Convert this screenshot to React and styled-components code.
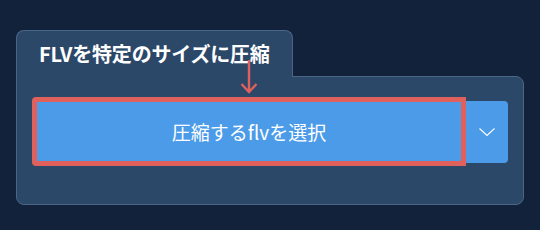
import React from 'react';
import styled, { createGlobalStyle } from 'styled-components';

const GlobalStyle = createGlobalStyle`
  html, body {
    margin: 0;
    padding: 0;
    background: #12223a;
  }
  body {
    font-family: "Noto Sans CJK JP", "Noto Sans", sans-serif;
  }
`;

const Page = styled.div`
  width: 540px;
  height: 230px;
  padding: 30px 0 0 16px;
  box-sizing: border-box;
  position: relative;
`;

const Tab = styled.div`
  position: relative;
  z-index: 1;
  display: flex;
  align-items: center;
  box-sizing: border-box;
  width: 277px;
  height: 47px;
  margin-bottom: -1px;
  padding: 0 0 2px 22px;
  background: #2c4869;
  border: 1px solid #4a6586;
  border-bottom: none;
  border-radius: 8px 8px 0 0;
  color: #ffffff;
  font-size: 20px;
  font-weight: 700;
  letter-spacing: -0.2px;
`;

const Panel = styled.div`
  box-sizing: border-box;
  width: 508px;
  height: 129px;
  padding: 20px 15px;
  background: #2c4869;
  border: 1px solid #4a6586;
  border-radius: 0 8px 8px 8px;
`;

const ButtonGroup = styled.div`
  display: flex;
  align-items: center;
`;

const MainButton = styled.button`
  box-sizing: border-box;
  width: 434px;
  height: 69px;
  padding: 0 0 1px;
  background: #4c9be8;
  border: 5px solid #e0605c;
  border-radius: 4px 0 0 4px;
  color: #ffffff;
  font-family: inherit;
  font-size: 19px;
  cursor: pointer;
`;

const DropButton = styled.button`
  display: flex;
  align-items: center;
  justify-content: center;
  box-sizing: border-box;
  width: 42px;
  height: 62px;
  padding: 0;
  background: #4c9be8;
  border: none;
  border-radius: 0 4px 4px 0;
  cursor: pointer;
`;

const Marker = styled.svg`
  position: absolute;
  z-index: 2;
  left: 240px;
  top: 59px;
`;

export default function App() {
  return (
    <>
      <GlobalStyle />
      <Page>
        <Tab>FLVを特定のサイズに圧縮</Tab>
        <Panel>
          <ButtonGroup>
            <MainButton>圧縮するflvを選択</MainButton>
            <DropButton>
              <svg width="18" height="10" viewBox="0 0 18 10">
                <path d="M1.5 1.5 L9 8.5 L16.5 1.5" fill="none" stroke="#ffffff" strokeWidth="1.1" />
              </svg>
            </DropButton>
          </ButtonGroup>
        </Panel>
        <Marker width="18" height="36" viewBox="0 0 18 36">
          <path d="M9 1 V33 M1.5 25 L9 33 L16.5 25" fill="none" stroke="#e0605c" strokeWidth="2.4" />
        </Marker>
      </Page>
    </>
  );
}
